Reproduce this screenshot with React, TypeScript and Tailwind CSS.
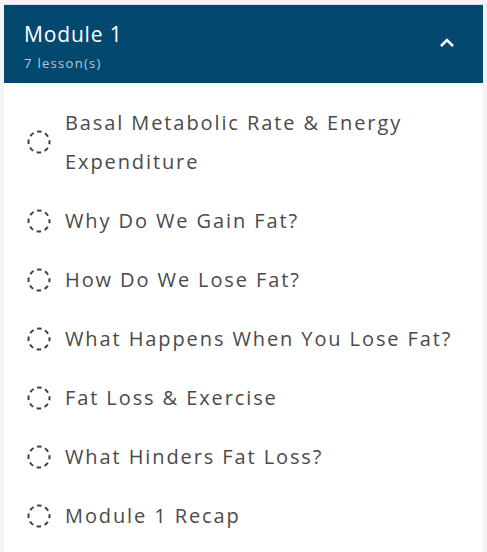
import { useState } from 'react';

const lessons = [
  'Basal Metabolic Rate & Energy Expenditure',
  'Why Do We Gain Fat?',
  'How Do We Lose Fat?',
  'What Happens When You Lose Fat?',
  'Fat Loss & Exercise',
  'What Hinders Fat Loss?',
  'Module 1 Recap',
];

const DashedCircle = () => (
  <svg width="24" height="24" viewBox="0 0 24 24" className="shrink-0">
    <circle
      cx="12"
      cy="12"
      r="10.5"
      fill="none"
      stroke="#3f3f3f"
      strokeWidth="2"
      strokeDasharray="4.5 3.75"
      strokeDashoffset="2.25"
    />
  </svg>
);

export default function App() {
  const [open, setOpen] = useState<boolean>(true);

  return (
    <div className="min-h-screen bg-[#f4f4f4] px-1 pt-1" style={{ fontFamily: '"Open Sans", sans-serif' }}>
      <div className="min-h-[548px] border-t border-[#dcdcdc] bg-white">
        <button
          type="button"
          onClick={() => setOpen(!open)}
          className="flex h-[78px] w-full items-start justify-between bg-[#03496f] pl-5 pr-7 pt-[15px] text-left"
        >
          <div className="flex flex-col">
            <span className="text-[21px] leading-[28px] tracking-[0.04em] text-white">Module 1</span>
            <span className="mt-[6px] text-[13px] leading-[18px] tracking-[0.1em] text-[#bccad6]">7 lesson(s)</span>
          </div>
          <svg width="16" height="10" viewBox="0 0 16 10" className={open ? 'mt-[18px]' : 'mt-[18px] rotate-180'}>
            <path d="M2 8 L8 2 L14 8" fill="none" stroke="#fff" strokeWidth="2.6" />
          </svg>
        </button>

        {open && (
          <ul className="pt-[10px] pb-[10px]">
            {lessons.map((title) => (
              <li key={title} className="flex items-center gap-[14px] py-[10px] pl-[23px] pr-[18px]">
                <DashedCircle />
                <span className="text-[20px] leading-[39px] tracking-[0.095em] text-[#4a4a4a]">{title}</span>
              </li>
            ))}
          </ul>
        )}
      </div>
    </div>
  );
}
